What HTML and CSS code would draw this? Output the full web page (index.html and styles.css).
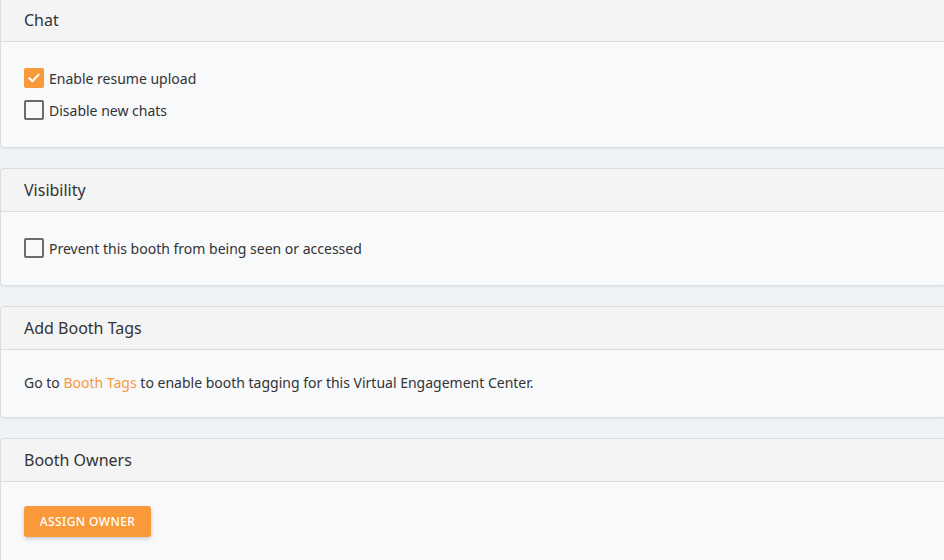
FILE: index.html
```html
<!DOCTYPE html>
<html lang="en">
<head>
  <meta charset="UTF-8">
  <title>Booth Settings</title>
  <link rel="stylesheet" href="styles.css">
</head>
<body>
  <div class="settings">
    <!-- Chat -->
    <section class="card">
      <div class="card-header">Chat</div>
      <div class="card-body">
        <label class="check-row">
          <span class="box checked">
            <svg viewBox="0 0 20 20" width="20" height="20"><path d="M5.3 10.2l3.1 3.1 6.2-6.7" fill="none" stroke="#fff" stroke-width="2" stroke-linecap="round" stroke-linejoin="round"/></svg>
          </span>
          Enable resume upload
        </label>
        <label class="check-row">
          <span class="box"></span>
          Disable new chats
        </label>
      </div>
    </section>

    <!-- Visibility -->
    <section class="card">
      <div class="card-header">Visibility</div>
      <div class="card-body">
        <label class="check-row">
          <span class="box"></span>
          Prevent this booth from being seen or accessed
        </label>
      </div>
    </section>

    <!-- Tags -->
    <section class="card">
      <div class="card-header">Add Booth Tags</div>
      <div class="card-body text-body">
        Go to <a href="#">Booth Tags</a> to enable booth tagging for this Virtual Engagement Center.
      </div>
    </section>

    <!-- Owners -->
    <section class="card">
      <div class="card-header">Booth Owners</div>
      <div class="card-body btn-body">
        <button class="btn-primary">Assign Owner</button>
      </div>
    </section>
  </div>
</body>
</html>
```

FILE: styles.css
```css
body {
  margin: 0;
  background: #f0f3f6;
  font-family: "Noto Sans", "Open Sans", sans-serif;
  color: #333;
}
.settings {
  margin-top: -2px;
}
.card {
  background: #f8f9fb;
  border: 1px solid #dcdcdc;
  border-right: none;
  border-radius: 4px 0 0 4px;
  margin-bottom: 20px;
  box-shadow: 0 1px 2px rgba(0, 0, 0, 0.06);
}
.card-header {
  height: 42px;
  line-height: 42px;
  padding: 0 23px;
  background: #f4f4f4;
  border-bottom: 1px solid #dcdcdc;
  border-radius: 4px 0 0 0;
  font-size: 16px;
  color: #333;
}
.card-body {
  padding: 20px 23px 21px;
  font-size: 14px;
}
.check-row {
  display: flex;
  align-items: center;
  height: 32px;
  gap: 5px;
  cursor: pointer;
}
.box {
  width: 20px;
  height: 20px;
  box-sizing: border-box;
  border: 2px solid #6b6b6b;
  border-radius: 2px;
  display: flex;
  align-items: center;
  justify-content: center;
}
.box.checked {
  background: #f8993a;
  border-color: #f8993a;
}
.box.checked svg {
  flex: none;
}
.text-body {
  padding: 23px 23px 24px;
  line-height: 20px;
}
.text-body a {
  color: #f5993d;
  text-decoration: none;
}
.btn-body {
  padding: 24px 23px 30px;
}
.btn-primary {
  width: 127px;
  height: 31px;
  border: none;
  border-radius: 3px;
  background: #f9993a;
  color: #fff;
  font-family: "Noto Sans", sans-serif;
  font-size: 12px;
  font-weight: 500;
  text-transform: uppercase;
  letter-spacing: 0.4px;
  box-shadow: 0 2px 4px rgba(0, 0, 0, 0.18);
  cursor: pointer;
}
```
